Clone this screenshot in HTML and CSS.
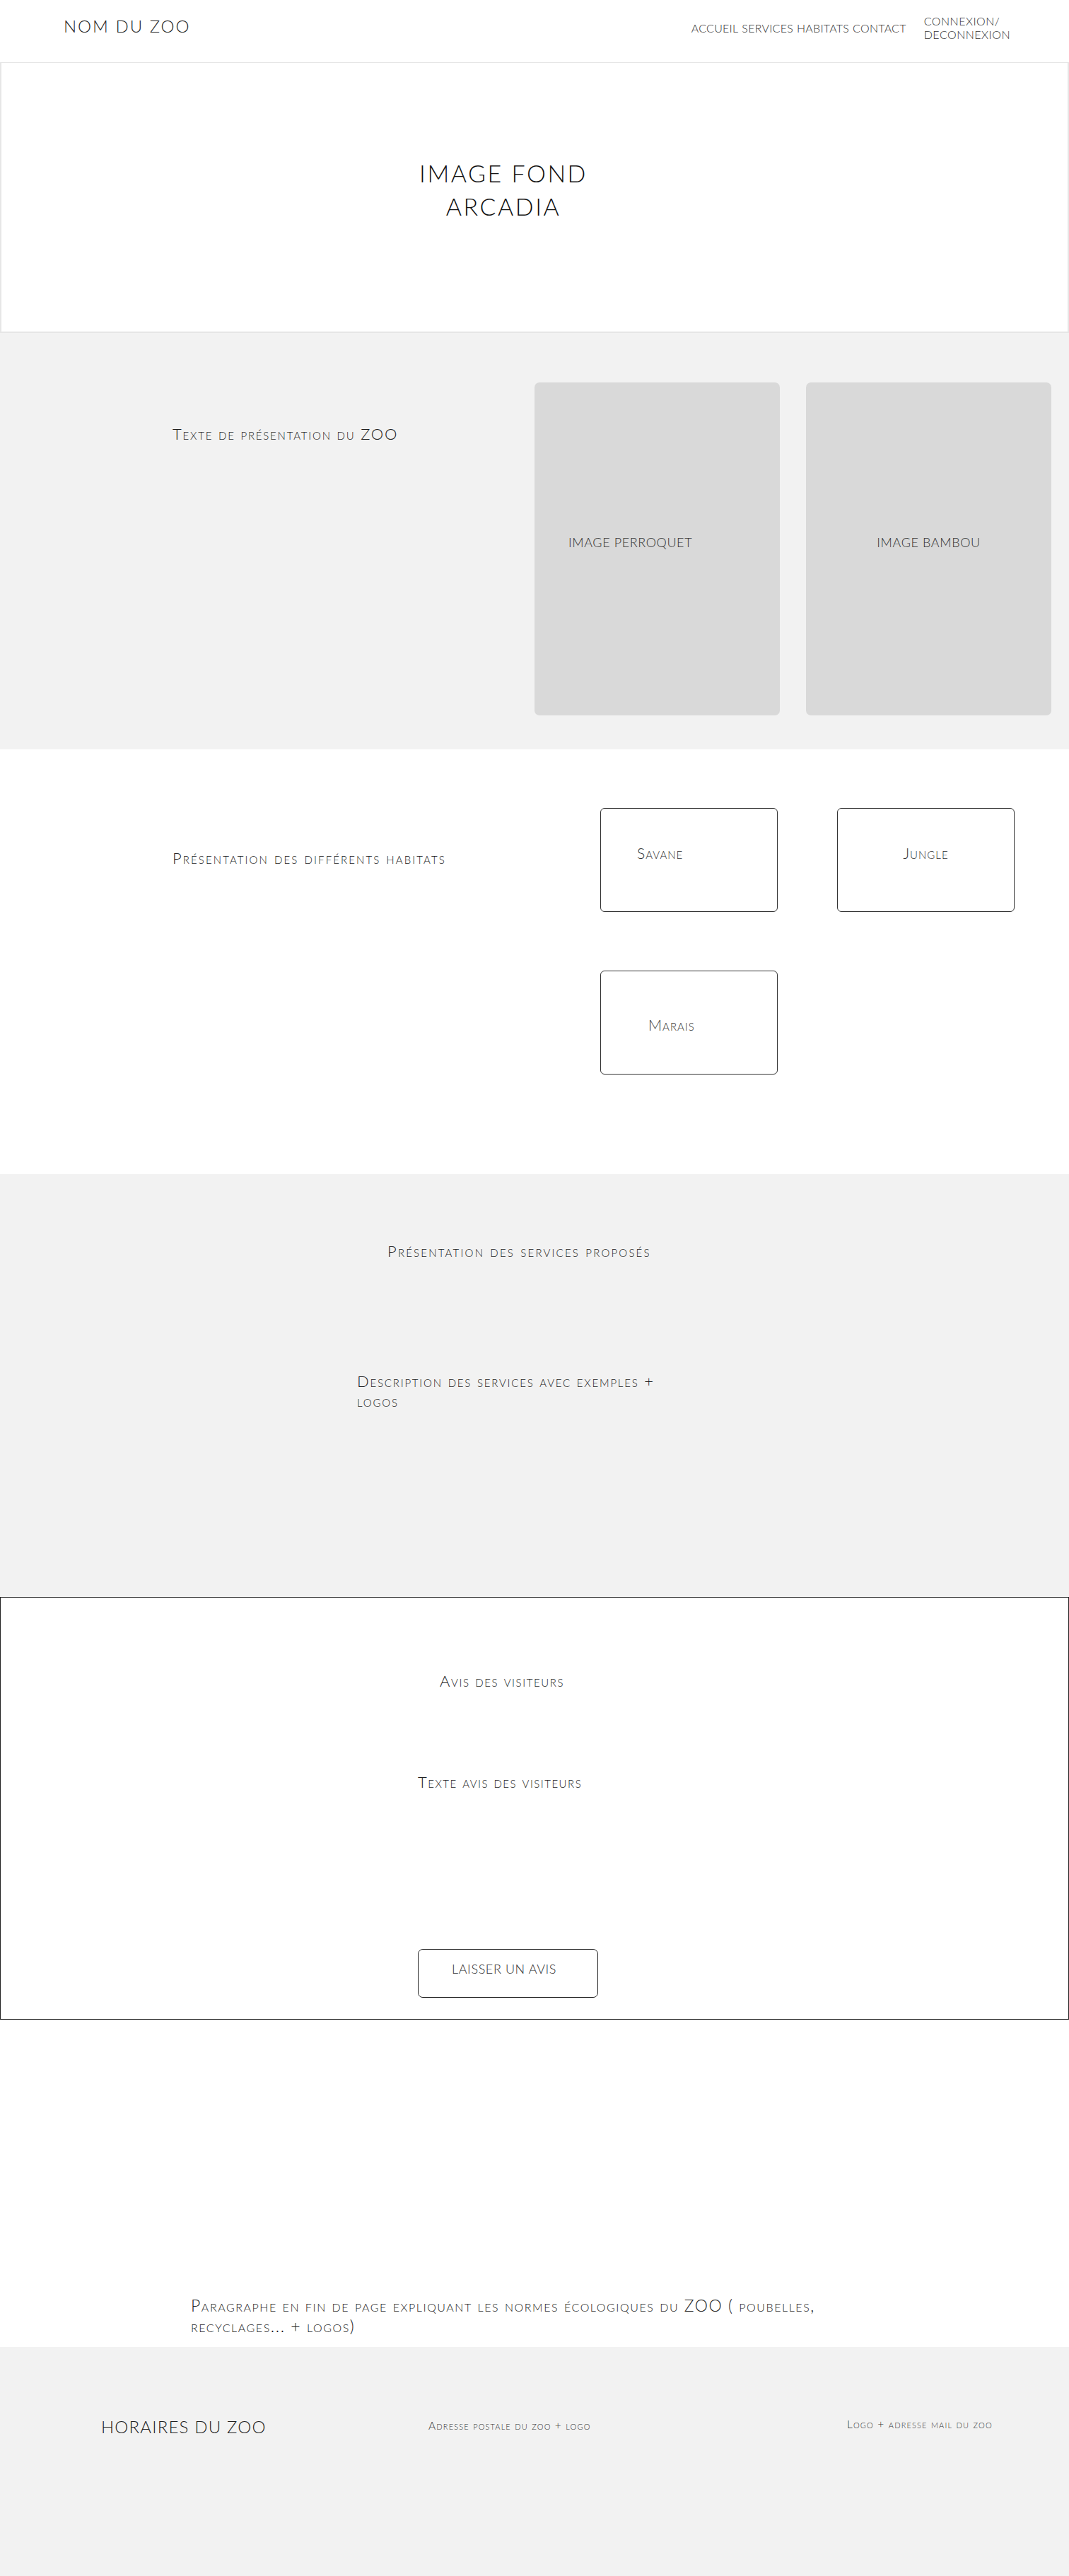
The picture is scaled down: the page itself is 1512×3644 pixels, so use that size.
FILE: index.html
```html
<!DOCTYPE html>
<html lang="fr">
<head>
    <meta charset="utf-8">
    <title>Nom du zoo</title>
    <link rel="stylesheet" href="styles.css">
</head>
<body>
    <header class="topbar">
        <div class="brand">NOM DU ZOO</div>
        <nav class="menu">
            <a href="#">ACCUEIL</a>
            <a href="#">SERVICES</a>
            <a href="#">HABITATS</a>
            <a href="#">CONTACT</a>
        </nav>
        <a class="login" href="#">CONNEXION/<br>DECONNEXION</a>
    </header>

    <section class="hero">
        <h1 class="hero-title">IMAGE FOND<br>ARCADIA</h1>
    </section>

    <section class="intro">
        <p class="intro-text">Texte de présentation du ZOO</p>
        <div class="intro-pics">
            <div class="pic pic-left">IMAGE PERROQUET</div>
            <div class="pic pic-center">IMAGE BAMBOU</div>
        </div>
    </section>

    <section class="habitats">
        <p class="habitats-text">Présentation des différents habitats</p>
        <div class="habitat-grid">
            <div class="habitat habitat-savane">Savane</div>
            <div class="habitat habitat-jungle">Jungle</div>
            <div class="habitat habitat-marais">Marais</div>
        </div>
    </section>

    <section class="services">
        <h2 class="services-title">Présentation des services proposés</h2>
        <p class="services-text">Description des services avec exemples + logos</p>
    </section>

    <section class="reviews">
        <h2 class="reviews-title">Avis des visiteurs</h2>
        <p class="reviews-text">Texte avis des visiteurs</p>
        <button class="reviews-btn">LAISSER UN AVIS</button>
    </section>

    <section class="eco">
        <p class="eco-text">Paragraphe en fin de page expliquant les normes écologiques du ZOO ( poubelles, recyclages... + logos)</p>
    </section>

    <footer class="footer">
        <div class="footer-hours">HORAIRES DU ZOO</div>
        <div class="footer-small footer-address">Adresse postale du zoo + logo</div>
        <div class="footer-small footer-mail">Logo + adresse mail du zoo</div>
    </footer>
</body>
</html>
```

FILE: styles.css
```css
* {
    box-sizing: border-box;
}
html, body {
    margin: 0;
    padding: 0;
}
body {
    font-family: 'Lato', 'Open Sans', sans-serif;
    font-weight: 300;
    color: #1e1e1e;
    background: #fff;
    width: 1512px;
}
p, h1, h2 {
    margin: 0;
    font-weight: 300;
}
a {
    color: inherit;
    text-decoration: none;
}

/* header */
.topbar {
    height: 89px;
    display: flex;
    align-items: center;
    padding: 0 0 0 90px;
    border-bottom: 1px solid #e6e6e6;
}
.brand {
    font-size: 24px;
    letter-spacing: 2px;
    margin-bottom: 16px;
}
.menu {
    display: flex;
    gap: 5px;
    margin-left: auto;
    font-size: 16px;
    letter-spacing: 0.25px;
    color: #333;
    margin-bottom: 10px;
}
.login {
    font-size: 16px;
    line-height: 19px;
    letter-spacing: 0.5px;
    color: #333;
    margin: 0 83px 10px 25px;
}

/* hero */
.hero {
    height: 382px;
    border: 2px solid #e6e6e6;
    border-top: 0;
    padding: 132px 0 0 560px;
}
.hero-title {
    width: 300px;
    text-align: center;
    font-size: 34px;
    line-height: 47px;
    letter-spacing: 2.5px;
    color: #111;
}

/* intro */
.intro {
    height: 589px;
    background: #f2f2f2;
    display: flex;
}
.intro-text {
    width: 756px;
    padding: 129px 0 0 244px;
    font-size: 22px;
    font-variant: small-caps;
    letter-spacing: 1.8px;
}
.intro-pics {
    display: flex;
    gap: 37px;
    padding-top: 70px;
}
.pic {
    width: 347px;
    height: 471px;
    background: #d9d9d9;
    border-radius: 7px;
    display: flex;
    align-items: center;
    font-size: 18px;
    letter-spacing: 0.6px;
    color: #333;
    padding-bottom: 20px;
}
.pic-left {
    padding-left: 48px;
}
.pic-center {
    justify-content: center;
}

/* habitats */
.habitats {
    height: 601px;
    display: flex;
}
.habitats-text {
    width: 849px;
    padding: 140px 0 0 244px;
    font-size: 22px;
    font-variant: small-caps;
    letter-spacing: 2.1px;
}
.habitat-grid {
    display: grid;
    grid-template-columns: 251px 251px;
    grid-auto-rows: 147px;
    column-gap: 84px;
    row-gap: 83px;
    padding-top: 83px;
    align-content: start;
}
.habitat {
    border: 1px solid #333;
    border-radius: 6px;
    font-size: 21px;
    font-variant: small-caps;
    letter-spacing: 1px;
    color: #333;
}
.habitat-savane {
    padding: 50px 0 0 51px;
}
.habitat-jungle {
    padding-top: 50px;
    text-align: center;
}
.habitat-marais {
    padding: 63px 0 0 67px;
}

/* services */
.services {
    height: 598px;
    background: #f2f2f2;
    padding-top: 95px;
}
.services-title {
    padding-left: 548px;
    font-size: 22px;
    font-variant: small-caps;
    letter-spacing: 2.2px;
}
.services-text {
    margin: 157px 0 0 505px;
    width: 460px;
    font-size: 22px;
    line-height: 28px;
    font-variant: small-caps;
    letter-spacing: 1.8px;
}

/* reviews */
.reviews {
    height: 598px;
    border: 1px solid #222;
    padding-top: 104px;
    display: flex;
    flex-direction: column;
    align-items: flex-start;
}
.reviews-title {
    margin-left: 621px;
    font-size: 22px;
    font-variant: small-caps;
    letter-spacing: 1.6px;
}
.reviews-text {
    margin: 116px 0 0 590px;
    font-size: 22px;
    font-variant: small-caps;
    letter-spacing: 1.5px;
}
.reviews-btn {
    margin: 223px 0 0 590px;
    width: 255px;
    height: 69px;
    border: 1px solid #222;
    border-radius: 7px;
    background: #fff;
    font-family: inherit;
    font-weight: 300;
    font-size: 18px;
    letter-spacing: 0.6px;
    color: #333;
    text-align: left;
    padding: 15px 0 0 47px;
    display: flex;
    align-items: flex-start;
    line-height: 24px;
}

/* eco */
.eco {
    height: 463px;
    padding: 390px 0 0 270px;
}
.eco-text {
    width: 910px;
    font-size: 23px;
    line-height: 29px;
    font-variant: small-caps;
    letter-spacing: 1.55px;
}

/* footer */
.footer {
    height: 324px;
    background: #f2f2f2;
    display: flex;
    align-items: flex-start;
    padding: 98px 0 0 143px;
}
.footer-hours {
    font-size: 24px;
    letter-spacing: 1.2px;
    width: 463px;
}
.footer-small {
    font-size: 15.5px;
    font-variant: small-caps;
    letter-spacing: 1.15px;
    color: #333;
    padding-top: 4px;
}
.footer-address {
    width: 592px;
}
.footer-mail {
    padding-top: 2px;
}
```
